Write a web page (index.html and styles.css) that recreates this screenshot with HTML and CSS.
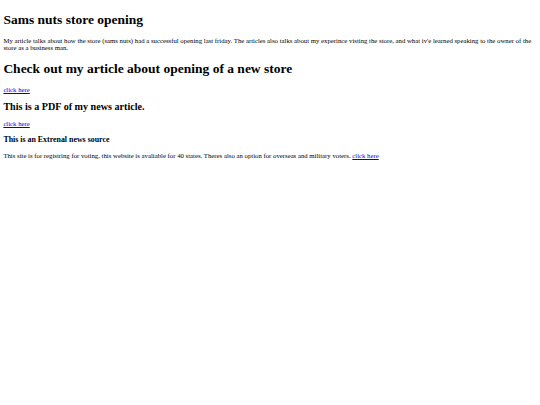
FILE: index.html
```html
<!DOCTYPE html>
<html>
<head>
<meta charset="utf-8">
<title>Sams nuts</title>
<link rel="stylesheet" href="styles.css">
</head>
<body>
<h1 class="title">Sams nuts store opening</h1>
<p class="text">My article talks about how the store (sams nuts) had a successful opening last friday. The articles also talks about my experince visting the store, and what iv'e learned speaking to the owner of the store as a business man.</p>
<h1 class="title">Check out my article about opening of a new store</h1>
<p class="text"><a class="link" href="#">click here</a></p>
<h2 class="sub">This is a PDF of my news article.</h2>
<p class="text"><a class="link" href="#">click here</a></p>
<h3 class="minor">This is an Extrenal news source</h3>
<p class="text">This site is for registring for voting, this website is avaliable for 40 states. Theres also an option for overseas and military voters. <a class="link" href="#">click here</a></p>
</body>
</html>
```
FILE: styles.css
```css
html {
  background: #ffffff;
}
body {
  margin: 3.375px;
  font-family: "Liberation Serif", "Times New Roman", serif;
  font-size: 6.75px;
  line-height: normal;
  color: #000000;
}
.title {
  font-size: 13.5px;
  font-weight: bold;
  margin: 9.05px 0;
}
.sub {
  font-size: 10.125px;
  font-weight: bold;
  margin: 8.4px 0;
}
.minor {
  font-size: 7.9px;
  font-weight: bold;
  margin: 7.9px 0;
}
.text {
  margin: 6.75px 0;
}
.link {
  color: #0000ee;
  text-decoration: underline;
}
```
